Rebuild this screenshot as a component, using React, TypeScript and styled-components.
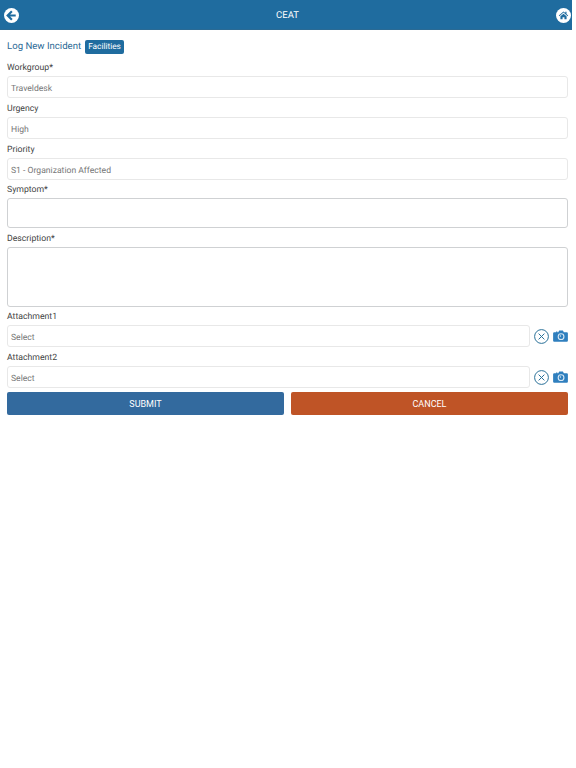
import React from "react";
import styled, { createGlobalStyle } from "styled-components";

const Global = createGlobalStyle`
  html, body { margin: 0; padding: 0; background: #fff; }
  body {
    font-family: Roboto, "Liberation Sans", Arial, sans-serif;
    text-rendering: geometricPrecision;
  }
  * { box-sizing: border-box; }
`;

function BackIcon() {
  return (
    <svg width="15" height="15" viewBox="0 0 16 16">
      <circle cx="8" cy="8" r="8" fill="#fff" />
      <path d="M8.400 3.500 3.900 8l4.500 4.500M4.400 8h8.100" fill="none" stroke="#1f6c9f" strokeWidth="2.300" />
    </svg>
  );
}

function HomeIcon() {
  return (
    <svg width="15" height="15" viewBox="0 0 16 16">
      <circle cx="8" cy="8" r="8" fill="#fff" />
      <path d="M8 3.600 3 8l.6.700L8 4.900l4.400 3.800.6-.7-1.800-1.600V4h-1.300v1.300Z M4.700 8.900 8 6l3.300 2.900V12H9V9.800H7V12H4.700Z" fill="#1f6c9f" />
    </svg>
  );
}

function ClearIcon() {
  return (
    <svg width="15" height="15" viewBox="0 0 15 15">
      <circle cx="7.500" cy="7.500" r="6.900" fill="none" stroke="#2a7199" strokeWidth="1" />
      <path d="m4.600 4.600 5.800 5.800m0-5.800-5.800 5.800" fill="none" stroke="#2a7199" strokeWidth="1" />
    </svg>
  );
}

function CameraIcon() {
  return (
    <svg width="15" height="12" viewBox="0 0 16 13">
      <path d="M1.200 2.400h2V1.600h1.400v.8h1L6.600.6h4l1 1.800h3.200q1.200 0 1.200 1.200v8q0 1.200-1.200 1.200H1.200Q0 12.800 0 11.600v-8q0-1.200 1.200-1.200Z" fill="#2f7fbe" />
      <circle cx="8.600" cy="7.200" r="3.700" fill="#d8e8f4" />
      <circle cx="8.600" cy="7.200" r="2.500" fill="#2f7fbe" />
      <circle cx="7.900" cy="6.500" r="0.800" fill="#d8e8f4" />
    </svg>
  );
}

const Header = styled.header`
  width: 572px;
  height: 30px;
  background: #1f6c9f;
  border-bottom: 1px solid #2a6a94;
  display: flex;
  align-items: center;
  justify-content: space-between;
  padding: 1px 1px 0 4px;
  color: #fff;
  font-size: 9.500px;
`;

const IconSlot = styled.span`
  display: flex;
`;

const Form = styled.main`
  padding: 9px 8px 0 7px;
  display: flex;
  flex-direction: column;
`;

const TitleRow = styled.div`
  display: flex;
  align-items: center;
  gap: 4px;
  height: 15px;
  margin-bottom: 6px;
`;

const Title = styled.h1`
  margin: 0;
  font-size: 9.600px;
  font-weight: 400;
  color: #2c6a96;
`;

const Tag = styled.span`
  background: #1f6c9f;
  color: #fff;
  font-size: 8.300px;
  line-height: 14px;
  padding: 0 3px;
  border-radius: 2px;
`;

const Label = styled.label`
  display: block;
  font-size: 8.700px;
  line-height: 11px;
  height: 16px;
  padding-top: 3px;
  color: #444;
`;

const Field = styled.div<{ $height: number; $strong?: boolean }>`
  height: ${({ $height }) => $height}px;
  border: 1px solid ${({ $strong }) => ($strong ? "#cfd1d3" : "#e8e8e8")};
  border-radius: 3px;
  background: #fff;
  display: flex;
  align-items: center;
  padding: 3px 3px 0;
  font-size: 8.600px;
  color: #777;
  flex: ${({ $strong }) => ($strong ? "none" : "1")};
`;

const Block = styled.div<{ $gap: number }>`
  margin-bottom: ${({ $gap }) => $gap}px;
`;

const AttachRow = styled.div`
  display: flex;
  align-items: center;
`;

const AttachIcons = styled.div`
  width: 38px;
  padding-left: 4px;
  display: flex;
  align-items: center;
  justify-content: space-between;
`;

const Buttons = styled.div`
  display: grid;
  grid-template-columns: 277px 277px;
  justify-content: space-between;
  margin-top: 4px;
`;

const Button = styled.button<{ $bg: string }>`
  height: 23px;
  border: 0;
  border-radius: 2px;
  padding: 0;
  background: ${({ $bg }) => $bg};
  color: #fff;
  font: inherit;
  font-size: 9px;
`;

export default function App() {
  return (
    <>
      <Global />
      <Header>
        <IconSlot><BackIcon /></IconSlot>
        <span>CEAT</span>
        <IconSlot><HomeIcon /></IconSlot>
      </Header>
      <Form>
        <TitleRow>
          <Title>Log New Incident</Title>
          <Tag>Facilities</Tag>
        </TitleRow>
        <Block $gap={3}><Label>Workgroup*</Label><Field $height={22}>Traveldesk</Field></Block>
        <Block $gap={3}><Label>Urgency</Label><Field $height={22}>High</Field></Block>
        <Block $gap={2}><Label>Priority</Label><Field $height={22}>S1 - Organization Affected</Field></Block>
        <Block $gap={3}><Label>Symptom*</Label><Field $height={30} $strong /></Block>
        <Block $gap={2}><Label>Description*</Label><Field $height={60} $strong /></Block>
        <Block $gap={3}>
          <Label>Attachment1</Label>
          <AttachRow>
            <Field $height={22}>Select</Field>
            <AttachIcons><ClearIcon /><CameraIcon /></AttachIcons>
          </AttachRow>
        </Block>
        <Block $gap={0}>
          <Label>Attachment2</Label>
          <AttachRow>
            <Field $height={22}>Select</Field>
            <AttachIcons><ClearIcon /><CameraIcon /></AttachIcons>
          </AttachRow>
        </Block>
        <Buttons>
          <Button $bg="#336a9e">SUBMIT</Button>
          <Button $bg="#bf5426">CANCEL</Button>
        </Buttons>
      </Form>
    </>
  );
}
